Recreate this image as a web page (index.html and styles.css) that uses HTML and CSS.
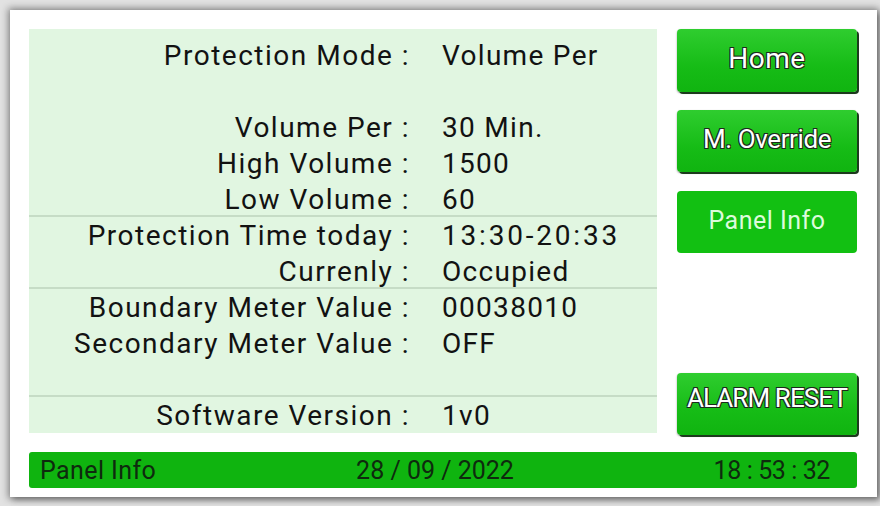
FILE: index.html
```html
<!DOCTYPE html>
<html>
<head>
<meta charset="utf-8">
<link rel="stylesheet" href="styles.css">
</head>
<body>
<div class="screen">
  <div class="panel">
    <div class="main">
      <div class="info">
        <div class="row"><span class="lbl">Protection Mode :</span><span class="val">Volume Per</span></div>
        <div class="row"><span class="lbl"></span><span class="val"></span></div>
        <div class="row"><span class="lbl">Volume Per :</span><span class="val">30 Min.</span></div>
        <div class="row"><span class="lbl">High Volume :</span><span class="val">1500</span></div>
        <div class="row sep"><span class="lbl">Low Volume :</span><span class="val">60</span></div>
        <div class="row"><span class="lbl">Protection Time today :</span><span class="val num">13:30-20:33</span></div>
        <div class="row sep"><span class="lbl">Currenly :</span><span class="val">Occupied</span></div>
        <div class="row"><span class="lbl">Boundary Meter Value :</span><span class="val">00038010</span></div>
        <div class="row"><span class="lbl">Secondary Meter Value :</span><span class="val">OFF</span></div>
        <div class="row sep"><span class="lbl"></span><span class="val"></span></div>
        <div class="row"><span class="lbl">Software Version :</span><span class="val">1v0</span></div>
      </div>
      <div class="buttons">
        <div class="btn btn-home">Home</div>
        <div class="btn btn-narrow">M. Override</div>
        <div class="btn btn-flat">Panel Info</div>
        <div class="btn btn-narrow btn-alarm">ALARM RESET</div>
      </div>
    </div>
    <div class="footer">
      <span class="f-left">Panel Info</span>
      <span class="f-mid">28 / 09 / 2022</span>
      <span class="f-right">18 : 53 : 32</span>
    </div>
  </div>
</div>
</body>
</html>
```
FILE: styles.css
```css
html, body {
  margin: 0;
  padding: 0;
}
body {
  width: 880px;
  height: 506px;
  background: #e2e2e2;
  font-family: Roboto, "Liberation Sans", sans-serif;
  overflow: hidden;
}
.screen {
  padding: 10px 13px 9px 10px;
}
.panel {
  width: 838px;
  height: 468px;
  background: #ffffff;
  padding: 19px 10px 0 19px;
  box-shadow: 0 0 7px 2px rgba(0,0,0,0.38), 3px 3px 6px rgba(0,0,0,0.3);
}
.main {
  display: flex;
  gap: 20px;
  height: 405px;
}
.info {
  width: 628px;
  height: 404px;
  background: #e1f6e1;
  padding-top: 8px;
  box-sizing: border-box;
}
.row {
  display: grid;
  grid-template-columns: 381px 1fr;
  column-gap: 32px;
  height: 36px;
  align-items: center;
  font-size: 28px;
  color: #121212;
}
.row.sep {
  box-shadow: inset 0 -2px 0 #c6dcc6;
}
.lbl {
  text-align: right;
  white-space: nowrap;
  letter-spacing: 1.5px;
}
.val {
  white-space: nowrap;
  letter-spacing: 1.3px;
}
.val.num {
  letter-spacing: 2.8px;
}
.buttons {
  width: 180px;
  display: flex;
  flex-direction: column;
  gap: 18px;
}
.btn {
  height: 62px;
  border-radius: 4px;
  background: linear-gradient(#2fcd2f, #16bc16 60%, #10b410);
  box-shadow: 2px 2px 0 #1d3a1d, 0 1px 2px rgba(0,0,0,0.4);
  display: flex;
  align-items: center;
  justify-content: center;
  color: #ffffff;
  font-size: 28px;
  text-shadow: -1px -1px 0 #1c2a1c, 1px -1px 0 #1c2a1c, -1px 1px 0 #1c2a1c, 1px 1px 0 #1c2a1c;
  box-sizing: border-box;
  padding-bottom: 4px;
}
.btn-home {
  height: 63px;
  letter-spacing: 0.5px;
}
.btn-narrow {
  font-size: 26px;
  letter-spacing: -0.4px;
}
.btn-flat {
  background: #12c012;
  box-shadow: none;
  color: #dcfbdc;
  text-shadow: none;
  font-size: 25px;
  letter-spacing: 0.5px;
  margin-top: 1px;
}
.btn-alarm {
  margin-top: auto;
  margin-bottom: -1px;
  padding-bottom: 12px;
  letter-spacing: -0.9px;
}
.footer {
  margin-top: 18px;
  width: 828px;
  height: 36px;
  background: #0fb40f;
  border-radius: 3px;
  display: grid;
  grid-template-columns: 1fr auto 1fr;
  align-items: center;
  color: #0e2a0e;
  font-size: 25px;
  box-sizing: border-box;
  padding: 0 27px 0 11px;
}
.f-left { justify-self: start; letter-spacing: 0.4px; }
.f-mid { justify-self: center; }
.f-right { justify-self: end; letter-spacing: -0.4px; }
```
